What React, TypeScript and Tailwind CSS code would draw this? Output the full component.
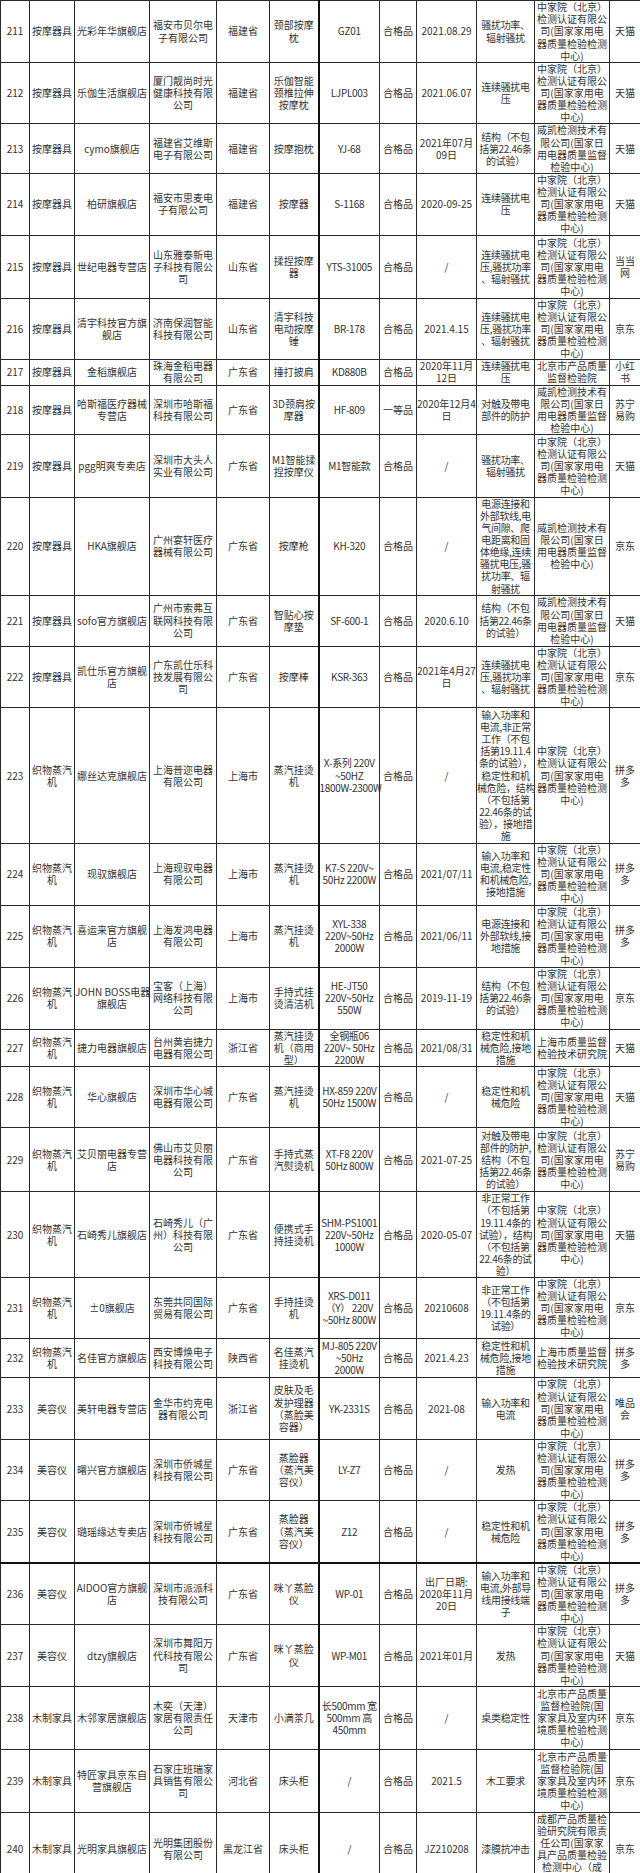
import React from 'react';

const ORG1 = '中家院（北京）\n检测认证有限公\n司(国家家用电\n器质量检验检测\n中心)';
const ORG2 = '威凯检测技术有\n限公司(国家日\n用电器质量监督\n检验中心)';
const ORG3 = '北京市产品质量\n监督检验院';
const ORG4 = '上海市质量监督\n检验技术研究院';
const ORG5 = '北京市产品质量\n监督检验院(国\n家家具及室内环\n境质量检验检测\n中心)';
const ORG6 = '成都产品质量检\n验研究院有限责\n任公司(国家家\n具产品质量检验\n检测中心（成\n都）)';

const STEAM = '织物蒸汽\n机';

// [height class, no, category, store, company, province, product, model, grade, date, issue, org, platform]
const rows: string[][] = [
  ['h-[62px]', '211', '按摩器具', '光彩年华旗舰店', '福安市贝尔电\n子有限公司', '福建省', '颈部按摩\n枕', 'GZ01', '合格品', '2021.08.29', '骚扰功率、\n辐射骚扰', ORG1, '天猫'],
  ['h-[61px]', '212', '按摩器具', '乐伽生活旗舰店', '厦门靓尚时光\n健康科技有限\n公司', '福建省', '乐伽智能\n颈椎拉伸\n按摩枕', 'LJPL003', '合格品', '2021.06.07', '连续骚扰电\n压', ORG1, '天猫'],
  ['h-[49px]', '213', '按摩器具', 'cymo旗舰店', '福建省艾维斯\n电子有限公司', '福建省', '按摩抱枕', 'YJ-68', '合格品', '2021年07月\n09日', '结构（不包\n括第22.46条\n的试验）', ORG2, '天猫'],
  ['h-[62px]', '214', '按摩器具', '柏研旗舰店', '福安市思麦电\n子有限公司', '福建省', '按摩器', 'S-1168', '合格品', '2020-09-25', '连续骚扰电\n压', ORG1, '天猫'],
  ['h-[63px]', '215', '按摩器具', '世纪电器专营店', '山东雅泰新电\n子科技有限公\n司', '山东省', '揉捏按摩\n器', 'YTS-31005', '合格品', '/', '连续骚扰电\n压,骚扰功率\n、辐射骚扰', ORG1, '当当\n网'],
  ['h-[60px]', '216', '按摩器具', '清宇科技官方旗\n舰店', '济南保润智能\n科技有限公司', '山东省', '清宇科技\n电动按摩\n锤', 'BR-178', '合格品', '2021.4.15', '连续骚扰电\n压,骚扰功率\n、辐射骚扰', ORG1, '京东'],
  ['h-[25px]', '217', '按摩器具', '金稻旗舰店', '珠海金稻电器\n有限公司', '广东省', '捶打披肩', 'KD880B', '合格品', '2020年11月\n12日', '连续骚扰电\n压', ORG3, '小红\n书'],
  ['h-[49px]', '218', '按摩器具', '哈斯福医疗器械\n专营店', '深圳市哈斯福\n科技有限公司', '广东省', '3D颈肩按\n摩器', 'HF-809', '一等品', '2020年12月4\n日', '对触及带电\n部件的防护', ORG2, '苏宁\n易购'],
  ['h-[63px]', '219', '按摩器具', 'pgg明爽专卖店', '深圳市大头人\n实业有限公司', '广东省', 'M1智能揉\n捏按摩仪', 'M1智能款', '合格品', '/', '骚扰功率、\n辐射骚扰', ORG1, '天猫'],
  ['h-[97px]', '220', '按摩器具', 'HKA旗舰店', '广州宴轩医疗\n器械有限公司', '广东省', '按摩枪', 'KH-320', '合格品', '/', '电源连接和\n外部软线,电\n气间隙、爬\n电距离和固\n体绝缘,连续\n骚扰电压,骚\n扰功率、辐\n射骚扰', ORG2, '京东'],
  ['h-[51px]', '221', '按摩器具', 'sofo官方旗舰店', '广州市索弗互\n联网科技有限\n公司', '广东省', '智贴心按\n摩垫', 'SF-600-1', '合格品', '2020.6.10', '结构（不包\n括第22.46条\n的试验）', ORG2, '天猫'],
  ['h-[61px]', '222', '按摩器具', '凯仕乐官方旗舰\n店', '广东凯仕乐科\n技发展有限公\n司', '广东省', '按摩棒', 'KSR-363', '合格品', '2021年4月27\n日', '连续骚扰电\n压,骚扰功率\n、辐射骚扰', ORG1, '京东'],
  ['h-[136px]', '223', STEAM, '娜丝达克旗舰店', '上海普迩电器\n有限公司', '上海市', '蒸汽挂烫\n机', 'X-系列 220V\n~50HZ\n1800W-2300W', '合格品', '/', '输入功率和\n电流,非正常\n工作（不包\n括第19.11.4\n条的试验），\n稳定性和机\n械危险，结构\n（不包括第\n22.46条的试\n验），接地措\n施', ORG1, '拼多\n多'],
  ['h-[61px]', '224', STEAM, '现驭旗舰店', '上海现驭电器\n有限公司', '上海市', '蒸汽挂烫\n机', 'K7-S 220V~\n50Hz 2200W', '合格品', '2021/07/11', '输入功率和\n电流,稳定性\n和机械危险,\n接地措施', ORG1, '拼多\n多'],
  ['h-[62px]', '225', STEAM, '喜运来官方旗舰\n店', '上海发鸿电器\n有限公司', '上海市', '蒸汽挂烫\n机', 'XYL-338\n220V~50Hz\n2000W', '合格品', '2021/06/11', '电源连接和\n外部软线,接\n地措施', ORG1, '拼多\n多'],
  ['h-[62px]', '226', STEAM, 'JOHN BOSS电器\n旗舰店', '宝客（上海）\n网络科技有限\n公司', '上海市', '手持式挂\n烫清洁机', 'HE-JT50\n220V~50Hz\n550W', '合格品', '2019-11-19', '结构（不包\n括第22.46条\n的试验）', ORG1, '京东'],
  ['h-[36px]', '227', STEAM, '捷力电器旗舰店', '台州黄岩捷力\n电器有限公司', '浙江省', '蒸汽挂烫\n机（商用\n型）', '全钢瓶06\n220V~ 50Hz\n2200W', '合格品', '2021/08/31', '稳定性和机\n械危险,接地\n措施', ORG4, '天猫'],
  ['h-[61px]', '228', STEAM, '华心旗舰店', '深圳市华心城\n电器有限公司', '广东省', '蒸汽挂烫\n机', 'HX-859 220V\n50Hz 1500W', '合格品', '/', '稳定性和机\n械危险', ORG1, '天猫'],
  ['h-[64px]', '229', STEAM, '艾贝丽电器专营\n店', '佛山市艾贝丽\n电器科技有限\n公司', '广东省', '手持式蒸\n汽熨烫机', 'XT-F8 220V\n50Hz 800W', '合格品', '2021-07-25', '对触及带电\n部件的防护,\n结构（不包\n括第22.46条\n的试验）', ORG1, '苏宁\n易购'],
  ['h-[84px]', '230', STEAM, '石崎秀儿旗舰店', '石崎秀儿（广\n州）科技有限\n公司', '广东省', '便携式手\n持挂烫机', 'SHM-PS1001\n220V~50Hz\n1000W', '合格品', '2020-05-07', '非正常工作\n（不包括第\n19.11.4条的\n试验），结构\n（不包括第\n22.46条的试\n验）', ORG1, '天猫'],
  ['h-[61px]', '231', STEAM, '±0旗舰店', '东莞共同国际\n贸易有限公司', '广东省', '手持挂烫\n机', 'XRS-D011\n（Y） 220V\n~50Hz 800W', '合格品', '20210608', '非正常工作\n（不包括第\n19.11.4条的\n试验）', ORG1, '京东'],
  ['h-[39px]', '232', STEAM, '名佳官方旗舰店', '西安博焕电子\n科技有限公司', '陕西省', '名佳蒸汽\n挂烫机', 'MJ-805 220V\n~50Hz\n2000W', '合格品', '2021.4.23', '稳定性和机\n械危险,接地\n措施', ORG4, '拼多\n多'],
  ['h-[61px]', '233', '美容仪', '美轩电器专营店', '金华市约克电\n器有限公司', '浙江省', '皮肤及毛\n发护理器\n（蒸脸美\n容器）', 'YK-2331S', '合格品', '2021-08', '输入功率和\n电流', ORG1, '唯品\n会'],
  ['h-[61px]', '234', '美容仪', '曙兴官方旗舰店', '深圳市侨城星\n科技有限公司', '广东省', '蒸脸器\n（蒸汽美\n容仪）', 'LY-Z7', '合格品', '/', '发热', ORG1, '拼多\n多'],
  ['h-[60px]', '235', '美容仪', '璐瑶缘达专卖店', '深圳市侨城星\n科技有限公司', '广东省', '蒸脸器\n（蒸汽美\n容仪）', 'Z12', '合格品', '/', '稳定性和机\n械危险', ORG1, '拼多\n多'],
  ['h-[62px]', '236', '美容仪', 'AIDOO官方旗舰\n店', '深圳市派派科\n技有限公司', '广东省', '咪丫蒸脸\n仪', 'WP-01', '合格品', '出厂日期:\n2020年11月\n20日', '输入功率和\n电流,外部导\n线用接线端\n子', ORG1, '拼多\n多'],
  ['h-[61px]', '237', '美容仪', 'dtzy旗舰店', '深圳市舞阳万\n代科技有限公\n司', '广东省', '咪丫蒸脸\n仪', 'WP-M01', '合格品', '2021年01月', '发热', ORG1, '天猫'],
  ['h-[63px]', '238', '木制家具', '木邻家居旗舰店', '木奕（天津）\n家居有限责任\n公司', '天津市', '小满茶几', '长500mm 宽\n500mm 高\n450mm', '合格品', '/', '桌类稳定性', ORG5, '京东'],
  ['h-[63px]', '239', '木制家具', '特匠家具京东自\n营旗舰店', '石家庄班瑞家\n具销售有限公\n司', '河北省', '床头柜', '/', '合格品', '2021.5', '木工要求', ORG5, '京东'],
  ['h-[74px]', '240', '木制家具', '光明家具旗舰店', '光明集团股份\n有限公司', '黑龙江省', '床头柜', '/', '合格品', 'JZ210208', '漆膜抗冲击', ORG6, '京东'],
];

const colWidths = [
  'w-[29px]', 'w-[45px]', 'w-[75px]', 'w-[67px]', 'w-[53px]', 'w-[49px]',
  'w-[61px]', 'w-[37px]', 'w-[60px]', 'w-[58px]', 'w-[75px]', 'w-[31px]',
];

const App = () => {
  return (
    <div className="w-[640px] h-[1873px] overflow-hidden bg-white">
      <table
        className="w-[640px] table-fixed border-collapse text-[10px] leading-[12.1px] text-[#333]"
        style={{ fontFamily: '"Noto Sans CJK SC", "Noto Sans", sans-serif' }}
      >
        <colgroup>
          {colWidths.map((w, i) => (
            <col key={i} className={w} />
          ))}
        </colgroup>
        <tbody>
          {rows.map((row) => {
            const [h, ...cells] = row;
            const thickBottom = cells[0] === '235';
            return (
              <tr key={cells[0]} className={h}>
                {cells.map((text, i) => (
                  <td
                    key={i}
                    className={
                      'border border-[#2a2a2a] p-0 text-center align-middle whitespace-pre overflow-visible ' +
                      (i === 6 ? 'border-l-2 border-l-[#111] ' : '') +
                      (i === 9 || i === 6 ? 'tracking-[-0.3px] ' : '') +
                      (thickBottom ? 'border-b-2 border-b-[#111]' : '')
                    }
                  >
                    {text}
                  </td>
                ))}
              </tr>
            );
          })}
        </tbody>
      </table>
    </div>
  );
};

export default App;
